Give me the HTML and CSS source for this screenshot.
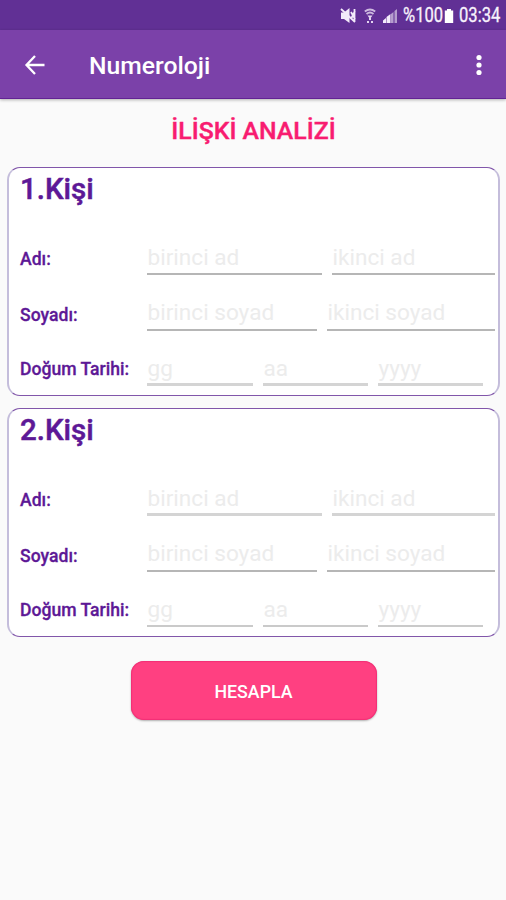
FILE: index.html
```html
<!DOCTYPE html>
<html lang="tr">
<head>
<meta charset="utf-8">
<title>Numeroloji</title>
<link rel="stylesheet" href="styles.css">
</head>
<body>
<div class="status">
  <svg class="mute" width="18" height="18" viewBox="0 0 18 18"><path d="M1 5.500h3L9.500 1v15L4 12H1z" fill="#f3ebfa"/><path d="M1 2l14 13M11 5l4 7M15 4l-4 8M14.500 2v13" stroke="#f3ebfa" stroke-width="1.800" fill="none"/></svg>
  <svg class="wifi" width="12" height="16" viewBox="0 0 12 16"><path d="M.8 3.500Q6-.5 11.200 3.500M2.500 6Q6 3.200 9.500 6" stroke="#cdb9df" stroke-width="1.900" fill="none"/><path d="M3.500 7.500h5L6 11zM5 10h2v2H5zM3 13h2v2H3zM7 13h2v2H7z" fill="#e3d5f0"/></svg>
  <svg class="signal" width="16" height="16" viewBox="0 0 16 16"><path d="M1 15V12.500L4 10v5zM4.500 15V9l4-3v9z" fill="#f3ebfa"/><path d="M9 15V6l2.500-2v11zM12.500 15V3L15 1v14z" fill="#b59dce"/></svg>
  <span class="percent">%100</span>
  <svg class="battery" width="10" height="16" viewBox="0 0 10 16"><path d="M3 1h4v1.500h2.200v12.500H.8V2.500H3z" fill="#fff"/></svg>
  <span class="clock">03:34</span>
</div>
<header class="bar">
  <svg class="back" width="22" height="20" viewBox="0 0 22 20"><path d="M20.500 10H2.500M11 1L2.500 10l8.500 9" stroke="#fff" stroke-width="2.300" fill="none"/></svg>
  <h1 class="bar-title">Numeroloji</h1>
  <svg class="more" width="8" height="22" viewBox="0 0 8 22"><g fill="#fff"><circle cx="4" cy="3.500" r="2.600"/><circle cx="4" cy="11" r="2.600"/><circle cx="4" cy="18.500" r="2.600"/></g></svg>
</header>
<main class="content">
  <h2 class="heading">İLİŞKİ ANALİZİ</h2>
  <section class="card">
    <h3 class="person">1.Kişi</h3>
    <div class="row"><span class="label">Adı:</span><div class="fields names"><span class="field">birinci ad</span><span class="field">ikinci ad</span></div></div>
    <div class="row"><span class="label">Soyadı:</span><div class="fields surnames"><span class="field">birinci soyad</span><span class="field">ikinci soyad</span></div></div>
    <div class="row date"><span class="label">Doğum Tarihi:</span><div class="fields dates wide"><span class="field">gg</span><span class="field">aa</span><span class="field">yyyy</span></div></div>
  </section>
  <section class="card">
    <h3 class="person">2.Kişi</h3>
    <div class="row"><span class="label">Adı:</span><div class="fields names wide"><span class="field">birinci ad</span><span class="field">ikinci ad</span></div></div>
    <div class="row"><span class="label">Soyadı:</span><div class="fields surnames"><span class="field">birinci soyad</span><span class="field">ikinci soyad</span></div></div>
    <div class="row date"><span class="label">Doğum Tarihi:</span><div class="fields dates"><span class="field">gg</span><span class="field">aa</span><span class="field">yyyy</span></div></div>
  </section>
  <button class="calculate">HESAPLA</button>
</main>
</body>
</html>
```
FILE: styles.css
```css
* { box-sizing: border-box; }
body {
  margin: 0;
  height: 900px;
  overflow: hidden;
  background: #fafafa;
  font-family: Roboto, "Liberation Sans", sans-serif;
}
h1, h2, h3 { margin: 0; font-weight: 500; }
svg { display: block; flex: none; }
.status {
  display: flex;
  align-items: center;
  justify-content: flex-end;
  height: 30px;
  padding: 2px 5px 0 0;
  background: #613095;
  color: #f8f2fc;
  font-size: 19.5px;
  line-height: 28px;
  -webkit-text-stroke: .3px;
}
.wifi { margin-left: 6px; }
.signal { margin-left: 6px; }
.percent { width: 40px; margin-left: 5px; transform: scaleX(.85); transform-origin: left; white-space: nowrap; }
.battery { margin-left: 1px; }
.clock { width: 42px; margin-left: 5px; transform: scaleX(.85); transform-origin: left; white-space: nowrap; }
.bar {
  display: flex;
  align-items: center;
  height: 69px;
  padding: 0 23px 0 24px;
  background: #7b41a9;
  border-bottom: 1px solid #622394;
  box-shadow: 0 1px 3px rgba(0, 0, 0, .3);
  color: #fff;
}
.bar-title { flex: 1; margin-left: 43px; font-size: 24.7px; line-height: 30px; padding-top: 3px; }
.back, .more { margin-top: 1px; }
.content { padding: 0 6px 0 7px; }
.heading {
  height: 68px;
  padding-top: 17px;
  text-align: center;
  color: #f81c70;
  font-size: 24.8px;
  line-height: 30px;
  -webkit-text-stroke: .4px;
}
.card {
  height: 229px;
  margin-bottom: 12px;
  padding: 4px 3px 0 11px;
  background: #fff;
  border: solid #8156aa;
  border-width: 1.5px 2px;
  border-left-color: #c4bddb;
  border-right-color: #c4bddb;
  border-radius: 13px;
  color: #5d1896;
}
.person { height: 47px; font-size: 29.5px; line-height: 34px; -webkit-text-stroke: .5px; }
.row { display: flex; height: 56px; }
.date { height: 55px; }
.label {
  width: 127px;
  flex: none;
  padding-top: 29px;
  font-size: 17.6px;
  font-weight: 500;
  line-height: 22px;
  white-space: nowrap;
  -webkit-text-stroke: .3px;
}
.date .label { padding-top: 27px; }
.fields { display: grid; flex: 1; gap: 10px; }
.names { grid-template-columns: 175px 163px; }
.surnames { grid-template-columns: 170px 168px; }
.dates { grid-template-columns: 106px 105px 105px; }
.field {
  padding: 25px 0 0 .5px;
  border-bottom: 2px solid #b6b6b6;
  color: #ececec;
  font-size: 22.6px;
  line-height: 27px;
  white-space: nowrap;
}
.surnames .field, .dates .field { padding-top: 24px; }
.dates .field { border-bottom-color: #cacaca; }
.wide .field { border-bottom: 3px solid #d4d4d4; }
.calculate {
  display: block;
  width: 246px;
  height: 59px;
  margin: 24px auto 0;
  border: 0;
  border-radius: 13px;
  background: #ff4081;
  box-shadow: 0 1px 2px rgba(0, 0, 0, .3), inset 0 0 1px 1px #f22f76;
  color: #fff;
  font: 500 17.8px/58px Roboto, "Liberation Sans", sans-serif;
  padding: 2px 0 0;
}
```
